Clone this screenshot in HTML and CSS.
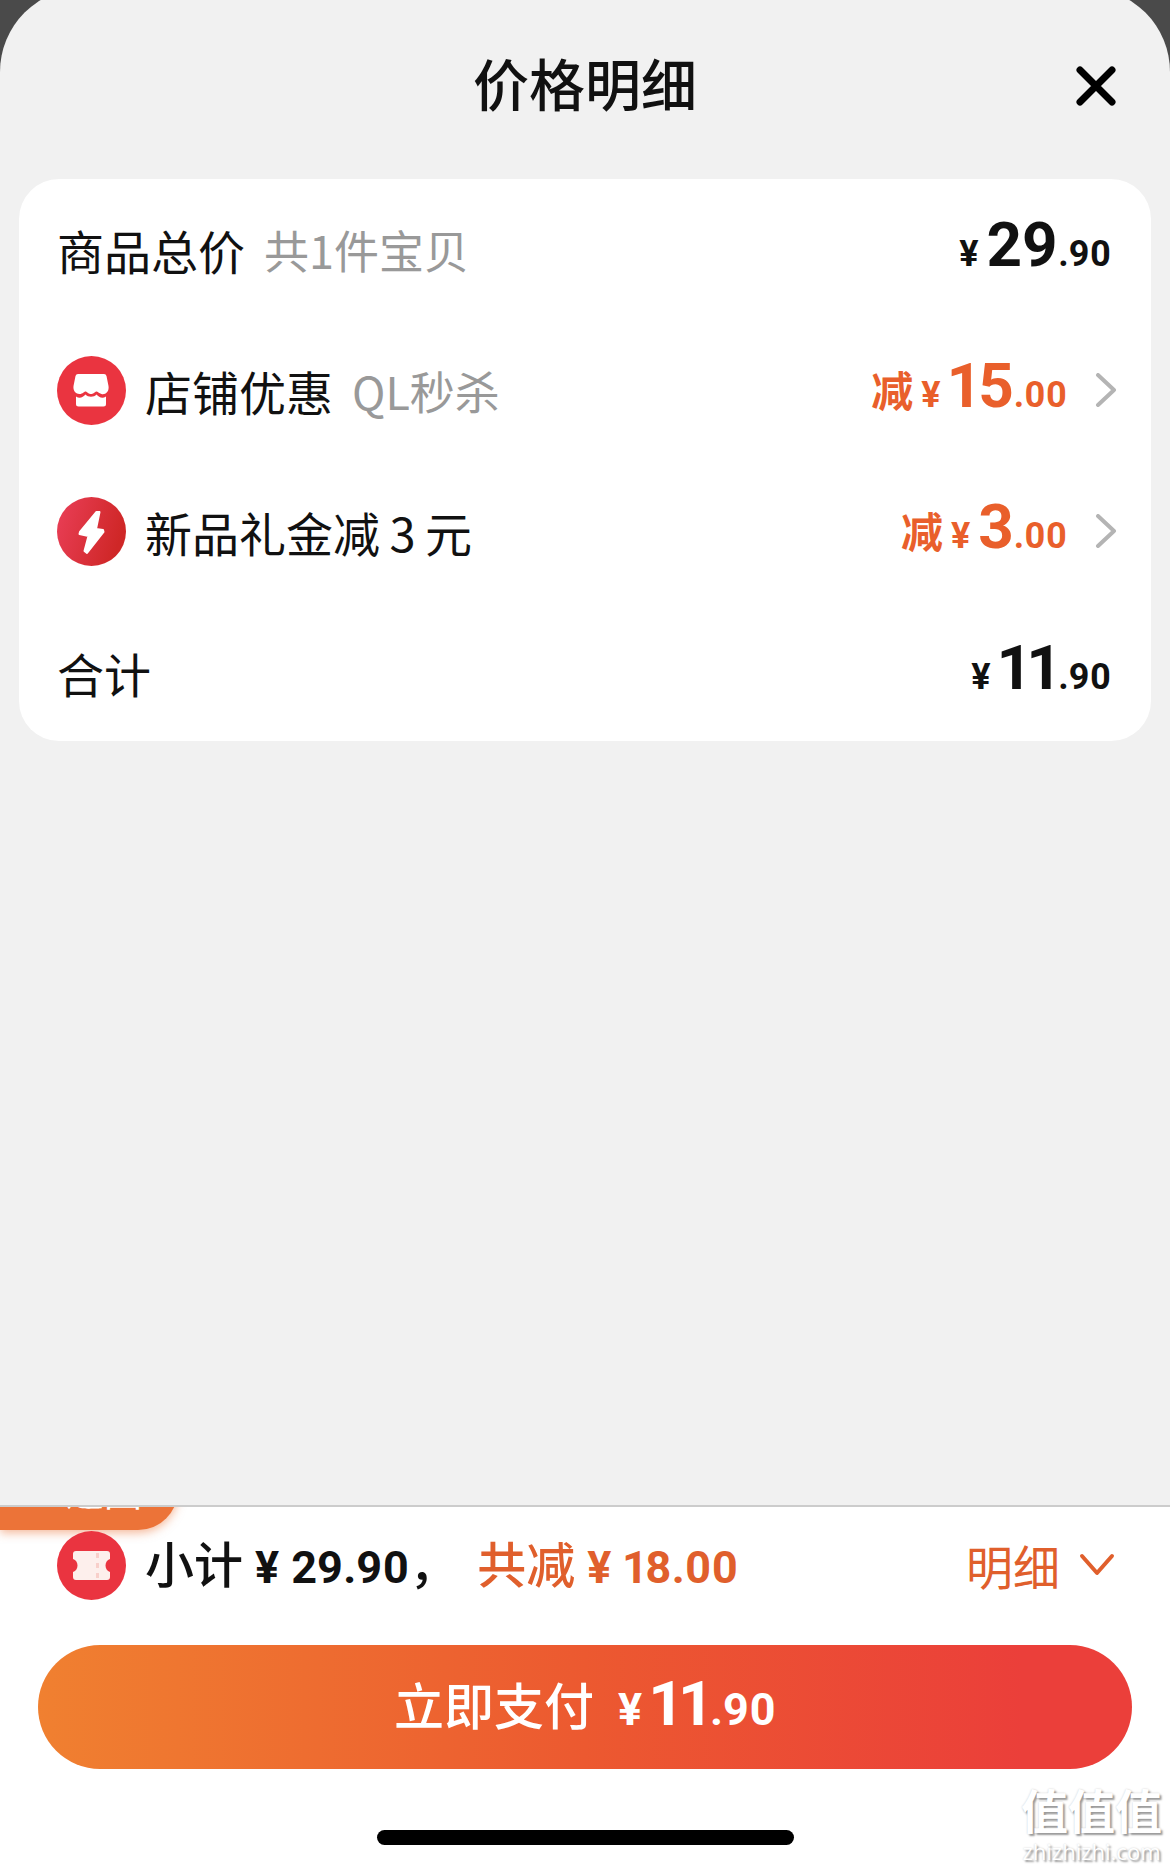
FILE: index.html
```html
<!DOCTYPE html>
<html lang="zh-CN">
<head>
  <meta charset="UTF-8">
  <meta name="viewport" content="width=device-width, initial-scale=1.0">
  <title>价格明细</title>
  <link rel="stylesheet" href="styles.css">
</head>
<body>
  <main class="sheet">
    <header class="sheet-header">
      <h1>价格明细</h1>
      <button class="close-button" type="button" aria-label="关闭">
        <svg width="40" height="40" viewBox="0 0 40 40" fill="none" stroke="#000" stroke-width="7" stroke-linecap="round">
          <path d="M4 4L36 36M36 4L4 36"/>
        </svg>
      </button>
    </header>

    <ul class="price-card">
      <li class="price-row">
        <span class="label">商品总价</span>
        <span class="note">共1件宝贝</span>
        <span class="amount"><span class="yen">¥</span><span class="int">29</span><span class="dec">.90</span></span>
      </li>
      <li class="price-row">
        <svg class="icon" viewBox="0 0 69 69">
          <circle cx="34.500" cy="34.500" r="34.500" fill="#ea3440"/>
          <path fill="#fff" d="M21 18H47Q49 18 49.500 20L51.500 30C52.500 36 48 39 44.500 38C42 37 40.500 35.500 39.500 35.500C38 35.500 37 38 34 38C31 38 30 35.500 28.500 35.500C27 35.500 26 38 22.500 38C18 38 16 34 16.500 30L18.500 20Q19 18 21 18Z"/>
          <path fill="#fff" d="M19 40.500C23 43 26 41 28.500 38.500C31 41.500 37 41.500 39.500 38.500C42 41 45 43 49 40.500V48Q49 50.500 46.500 50.500H21.500Q19 50.500 19 48Z"/>
        </svg>
        <span class="label">店铺优惠</span>
        <span class="note">QL秒杀</span>
        <button class="amount discount" type="button">
          <span class="minus">减</span><span class="yen">¥</span><span class="int">15</span><span class="dec">.00</span>
          <svg class="arrow" width="22" height="34" viewBox="0 0 22 34" fill="none" stroke="#b4b4b4" stroke-width="4" stroke-linecap="round" stroke-linejoin="round"><path d="M3 2L19 17L3 32"/></svg>
        </button>
      </li>
      <li class="price-row">
        <svg class="icon" viewBox="0 0 69 69">
          <defs>
            <linearGradient id="bolt-bg" x1="0" y1="0" x2="1" y2="0.300">
              <stop offset="0" stop-color="#ea3f58"/>
              <stop offset="1" stop-color="#cf2727"/>
            </linearGradient>
          </defs>
          <circle cx="34.500" cy="34.500" r="34.500" fill="url(#bolt-bg)"/>
          <path fill="#fff" stroke="#fff" stroke-width="2" stroke-linejoin="round" d="M39.500 15L23 35L22.500 37L31.500 39L27.500 54L30 56L46.500 35L46 33L39 32L42.500 15Z"/>
        </svg>
        <span class="label">新品礼金减&thinsp;3&thinsp;元</span>
        <button class="amount discount" type="button">
          <span class="minus">减</span><span class="yen">¥</span><span class="int">3</span><span class="dec">.00</span>
          <svg class="arrow" width="22" height="34" viewBox="0 0 22 34" fill="none" stroke="#b4b4b4" stroke-width="4" stroke-linecap="round" stroke-linejoin="round"><path d="M3 2L19 17L3 32"/></svg>
        </button>
      </li>
      <li class="price-row">
        <span class="label">合计</span>
        <span class="amount"><span class="yen">¥</span><span class="int">11</span><span class="dec">.90</span></span>
      </li>
    </ul>
  </main>

  <footer class="pay-bar">
    <div class="tab-clip"><a class="back-tab" href="#">返回</a></div>

    <div class="subtotal">
      <svg class="icon" viewBox="0 0 69 69">
        <circle cx="34.500" cy="34.500" r="34.500" fill="#ea3440"/>
        <path fill="#fdefec" d="M19 20H50Q53 20 53 23V28C47 30 47 39 53 41V46Q53 49 50 49H19Q16 49 16 46V41C22 39 22 30 16 28V23Q16 20 19 20Z"/>
        <path d="M40.500 22V48" stroke="#f8cfca" stroke-width="3" stroke-dasharray="5 5"/>
      </svg>
      <p class="sum">小计<span class="num">¥</span><span class="num">29.90</span>，</p>
      <p class="sum saved">共减<span class="num">¥</span><span class="num">18.00</span></p>
      <button class="detail-button" type="button">
        <span class="detail-text">明细</span>
        <svg width="36" height="24" viewBox="0 0 36 24" fill="none" stroke="#e05f2c" stroke-width="4" stroke-linecap="round" stroke-linejoin="round"><path d="M3 3L18 20L33 3"/></svg>
      </button>
    </div>

    <button class="pay-button" type="button">
      <span class="pay-text">立即支付</span><span class="yen">¥</span><span class="int">11</span><span class="dec">.90</span>
    </button>

    <div class="home-bar"></div>

    <div class="watermark">
      <span class="mark-name">值值值</span>
      <span class="mark-site">zhizhizhi.com</span>
    </div>
  </footer>
</body>
</html>
```
FILE: styles.css
```css
* {
  box-sizing: border-box;
}
body {
  margin: 0;
  min-height: 100vh;
  display: flex;
  flex-direction: column;
  overflow-x: hidden;
  font-family: "Noto Sans CJK SC", sans-serif;
  color: #111;
  background-color: #4a4a4a;
}
button {
  padding: 0;
  border: none;
  background: none;
  font-family: inherit;
  color: inherit;
  cursor: pointer;
}

/* Painel */
.sheet {
  flex: 1;
  margin-top: -12px;
  padding: 0 19px;
  background-color: #f1f1f1;
  border-radius: 84px 84px 0 0;
}
.sheet-header {
  display: grid;
  grid-template-columns: 1fr auto 1fr;
  align-items: center;
  padding: 56px 35px 51px;
}
.sheet-header h1 {
  grid-column: 2;
  margin: 0;
  padding-bottom: 8px;
  font-size: 56px;
  line-height: 76px;
  font-weight: 500;
}
.close-button {
  justify-self: end;
  display: flex;
}

.price-card {
  list-style: none;
  margin: 0;
  padding: 10px 40px 9px 38px;
  display: flex;
  flex-direction: column;
  gap: 21px;
  background-color: #fff;
  border-radius: 40px;
}
.price-row {
  display: flex;
  align-items: center;
  gap: 19px;
  height: 120px;
}
.icon {
  flex: none;
  width: 69px;
  height: 69px;
}
.label {
  font-size: 47px;
}
.note {
  font-size: 45px;
  color: #999;
}
.amount {
  margin-left: auto;
  display: flex;
  align-items: baseline;
  line-height: 80px;
}
.discount {
  margin-right: -6px;
  color: #e95f2b;
}
.minus {
  font-size: 42px;
  font-weight: 700;
}
.yen,
.int,
.dec,
.num {
  font-family: Roboto, sans-serif;
  font-weight: 700;
  font-variant-numeric: proportional-nums;
}
.yen {
  margin: 0 8px;
  font-size: 36px;
}
.int {
  font-size: 62px;
}
.dec {
  font-size: 36px;
}
.arrow {
  align-self: center;
  margin-left: 28px;
}

/* Barra de pagamento */
.pay-bar {
  position: relative;
  padding: 22px 38px 24px;
  border-top: 2px solid #ccc;
  background-color: #fff;
}
.tab-clip {
  position: absolute;
  left: 0;
  top: 0;
  width: 200px;
  height: 44px;
  overflow: hidden;
}
.back-tab {
  position: absolute;
  left: 0;
  bottom: 21px;
  width: 178px;
  height: 80px;
  padding-left: 66px;
  border-radius: 0 40px 40px 0;
  background-color: #ec7338;
  box-shadow: 0 3px 10px rgba(236, 115, 56, 0.5);
  color: #fff;
  font-size: 38px;
  line-height: 80px;
  text-decoration: none;
}
.subtotal {
  position: relative;
  display: flex;
  align-items: center;
  height: 72px;
  padding: 0 17px 0 19px;
}
.sum {
  margin: 0 0 0 19px;
  font-size: 49px;
  line-height: 66px;
  font-weight: 500;
  white-space: nowrap;
}
.num {
  margin-left: 12px;
  font-size: 45px;
}
.saved {
  color: #e05f2c;
}
.detail-button {
  margin-left: auto;
  display: flex;
  align-items: center;
  gap: 19px;
  color: #e05f2c;
}
.detail-text {
  font-size: 47px;
  line-height: 66px;
}
.pay-button {
  display: flex;
  justify-content: center;
  align-items: baseline;
  width: 100%;
  height: 124px;
  margin-top: 44px;
  border-radius: 62px;
  background: linear-gradient(90deg, #f08030, #ec5930 50%, #eb3f3a 90%);
  color: #fff;
  line-height: 116px;
}
.pay-text {
  margin-right: 16px;
  font-size: 50px;
  font-weight: 500;
}
.pay-button .yen,
.pay-button .dec {
  font-size: 45px;
}
.home-bar {
  width: 417px;
  height: 15px;
  margin: 61px auto 0;
  border-radius: 8px;
  background-color: #000;
}
.watermark {
  position: absolute;
  right: 8px;
  bottom: 4px;
  display: flex;
  flex-direction: column;
  align-items: center;
  color: #fff;
  text-shadow: 2px 2px 2px #999, 0 0 2px #ccc;
}
.mark-name {
  font-size: 47px;
  line-height: 56px;
  font-weight: 700;
}
.mark-site {
  font-family: "Open Sans", sans-serif;
  font-size: 22px;
  line-height: 28px;
}
```
